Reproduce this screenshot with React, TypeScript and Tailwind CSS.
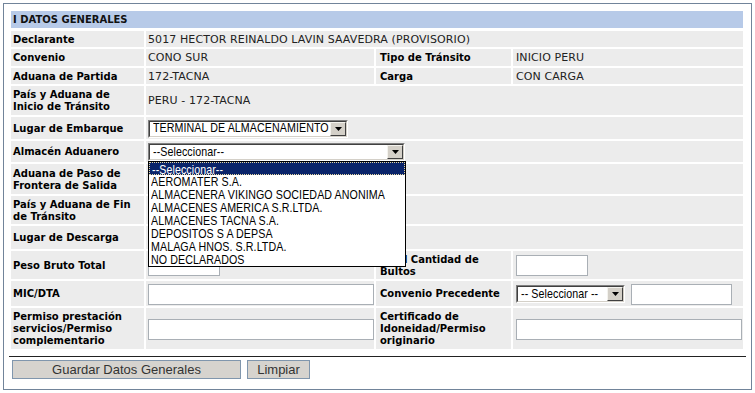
const label = "flex items-center bg-[#ececec] pl-[2px] pt-px font-['DejaVu_Sans',sans-serif] text-[10px] font-bold leading-[12px] text-black";
const value = "flex items-center bg-[#ececec] pl-[2px] pt-px font-['DejaVu_Sans',sans-serif] text-[11px] tracking-[0.1px] leading-[12px] text-[#222]";

// the page used a narrow sans in the form controls; squeeze Liberation Sans to match
function Narrow({ children }: { children: React.ReactNode }) {
  return (
    <span className="inline-block origin-left scale-x-[0.82] whitespace-nowrap font-['Liberation_Sans',sans-serif] text-[13px]">
      {children}
    </span>
  );
}

function Arrow() {
  return (
    <div className="flex h-full w-[16px] shrink-0 items-center justify-center border border-t-[#f4f3ee] border-l-[#f4f3ee] border-r-[#404040] border-b-[#404040] bg-[#d4d0c8]">
      <svg width="7" height="4" viewBox="0 0 7 4">
        <path d="M0 0h7L3.5 4z" fill="#000" />
      </svg>
    </div>
  );
}

function Select({ text, className, children }: { text: string; className: string; children?: React.ReactNode }) {
  return (
    <div className={`relative h-[18px] border border-t-[#808080] border-l-[#808080] border-r-white border-b-white ${className}`}>
      <div className="flex h-full items-center border border-t-[#404040] border-l-[#404040] border-r-[#d4d0c8] border-b-[#d4d0c8] bg-white">
        <div className="flex-1 overflow-hidden pl-[3px] leading-[14px] text-black">
          <Narrow>{text}</Narrow>
        </div>
        <Arrow />
      </div>
      {children}
    </div>
  );
}

function Input({ className }: { className: string }) {
  return <div className={`h-[21px] border border-[#a9afb5] bg-white ${className}`} />;
}

const almacenes = [
  "--Seleccionar--",
  "AEROMATER S.A.",
  "ALMACENERA VIKINGO SOCIEDAD ANONIMA",
  "ALMACENES AMERICA S.R.LTDA.",
  "ALMACENES TACNA S.A.",
  "DEPOSITOS S A DEPSA",
  "MALAGA HNOS. S.R.LTDA.",
  "NO DECLARADOS",
];

export default function App() {
  return (
    <div className="h-[393px] w-[755px] bg-white pl-[3px] pt-[3px]">
      <div className="h-[387px] w-[749px] border border-[#71849a] pl-[7px] pt-[7px]">
        <div className="flex h-[17px] w-[732px] items-center bg-[#b7cae8] pl-[2px] font-['DejaVu_Sans',sans-serif] text-[10px] font-bold text-[#111]">
          I DATOS GENERALES
        </div>

        <div className="mt-[3px] grid w-[732px] grid-cols-[133px_228px_135px_230px] grid-rows-[16px_17px_16px_29px_22px_21px_30px_28px_23px_28px_25px_41px] gap-[2px]">
          <div className={label}>Declarante</div>
          <div className={`${value} col-span-3`}>5017 HECTOR REINALDO LAVIN SAAVEDRA (PROVISORIO)</div>

          <div className={label}>Convenio</div>
          <div className={value}>CONO SUR</div>
          <div className={`${label} pl-[4px]`}>Tipo de Tránsito</div>
          <div className={`${value} pl-[3px]`}>INICIO PERU</div>

          <div className={label}>Aduana de Partida</div>
          <div className={value}>172-TACNA</div>
          <div className={`${label} pl-[4px]`}>Carga</div>
          <div className={`${value} pl-[3px]`}>CON CARGA</div>

          <div className={label}>
            País y Aduana de
            <br />
            Inicio de Tránsito
          </div>
          <div className={`${value} col-span-3`}>PERU - 172-TACNA</div>

          <div className={label}>Lugar de Embarque</div>
          <div className={`${value} col-span-3`}>
            <Select text="TERMINAL DE ALMACENAMIENTO" className="w-[200px]" />
          </div>

          <div className={label}>Almacén Aduanero</div>
          <div className={`${value} col-span-3 z-10`}>
            <Select text="--Seleccionar--" className="w-[257px]">
              <div className="absolute left-[-1px] top-[17px] w-[258px] overflow-hidden border border-black bg-white">
                {almacenes.map((a, i) => (
                  <div
                    key={a}
                    className={`h-[13px] pl-[2px] leading-[13px] ${
                      i === 0 ? "border border-dotted border-[#e8d8a0] bg-[#0a246a] pl-[1px] leading-[11px] text-white" : "text-black"
                    }`}
                  >
                    <Narrow>{a}</Narrow>
                  </div>
                ))}
              </div>
            </Select>
          </div>

          <div className={label}>
            Aduana de Paso de
            <br />
            Frontera de Salida
          </div>
          <div className={`${value} col-span-3`} />

          <div className={label}>
            País y Aduana de Fin
            <br />
            de Tránsito
          </div>
          <div className={`${value} col-span-3`} />

          <div className={label}>Lugar de Descarga</div>
          <div className={`${value} col-span-3`} />

          <div className={label}>Peso Bruto Total</div>
          <div className={value}>
            <Input className="w-[72px]" />
          </div>
          <div className={`${label} pl-[4px]`}>
            Total Cantidad de
            <br />
            Bultos
          </div>
          <div className={`${value} pl-[3px]`}>
            <Input className="w-[72px]" />
          </div>

          <div className={label}>MIC/DTA</div>
          <div className={value}>
            <Input className="w-[226px]" />
          </div>
          <div className={`${label} pl-[4px]`}>Convenio Precedente</div>
          <div className={`${value} gap-[6px] pl-[3px]`}>
            <Select text="-- Seleccionar --" className="w-[109px]" />
            <Input className="w-[101px]" />
          </div>

          <div className={label}>
            Permiso prestación
            <br />
            servicios/Permiso
            <br />
            complementario
          </div>
          <div className={value}>
            <Input className="w-[226px]" />
          </div>
          <div className={`${label} pl-[4px]`}>
            Certificado de
            <br />
            Idoneidad/Permiso
            <br />
            originario
          </div>
          <div className={`${value} pl-[3px]`}>
            <Input className="w-[226px]" />
          </div>
        </div>

        <div className="ml-[-2px] mt-[7px] h-px w-[737px] bg-[#222]" />

        <div className="ml-[1px] mt-[3px] flex gap-[6px] font-['Liberation_Sans',sans-serif] text-[13px] text-[#333]">
          <button className="h-[19px] w-[229px] border border-[#8096ad] bg-[#d6d3ce] leading-[17px]">Guardar Datos Generales</button>
          <button className="h-[19px] w-[63px] border border-[#8096ad] bg-[#d6d3ce] leading-[17px]">Limpiar</button>
        </div>
      </div>
    </div>
  );
}
